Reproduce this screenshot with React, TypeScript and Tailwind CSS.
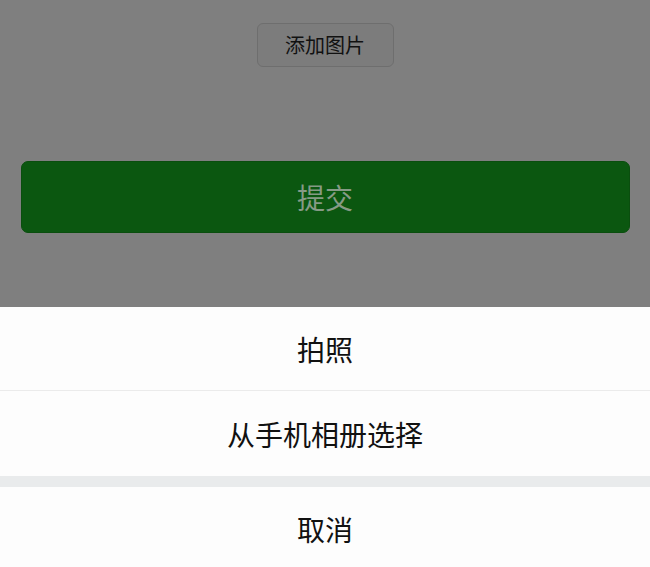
export default function App() {
  const font = { fontFamily: '"Noto Sans CJK SC", "Noto Sans", sans-serif' };
  return (
    <div className="w-[650px] h-[567px] overflow-hidden flex flex-col bg-[#7f7f7f]" style={font}>
      <div className="h-[307px] shrink-0 flex flex-col items-center pt-[23px]">
        <div className="w-[137px] h-[44px] rounded-[6px] border border-[#6e6e6e] bg-[#7c7c7c] flex items-center justify-center text-[20px] text-[#111111]">
          添加图片
        </div>
        <div className="mt-[94px] w-[609px] h-[72px] rounded-[7px] bg-[#0b5710] border border-[#0a4e0e] flex items-center justify-center text-[28px] text-[#869a86]">
          提交
        </div>
      </div>
      <div className="flex flex-col bg-[#fdfdfd] shrink-0">
        <div className="h-[84px] flex items-center justify-center text-[28px] text-[#111111] border-b border-[#ebebeb]">
          拍照
        </div>
        <div className="h-[85px] flex items-center justify-center text-[28px] text-[#111111]">
          从手机相册选择
        </div>
        <div className="h-[11px] bg-[#e9ebec]"></div>
        <div className="h-[84px] flex items-center justify-center text-[28px] text-[#111111]">
          取消
        </div>
      </div>
    </div>
  );
}
